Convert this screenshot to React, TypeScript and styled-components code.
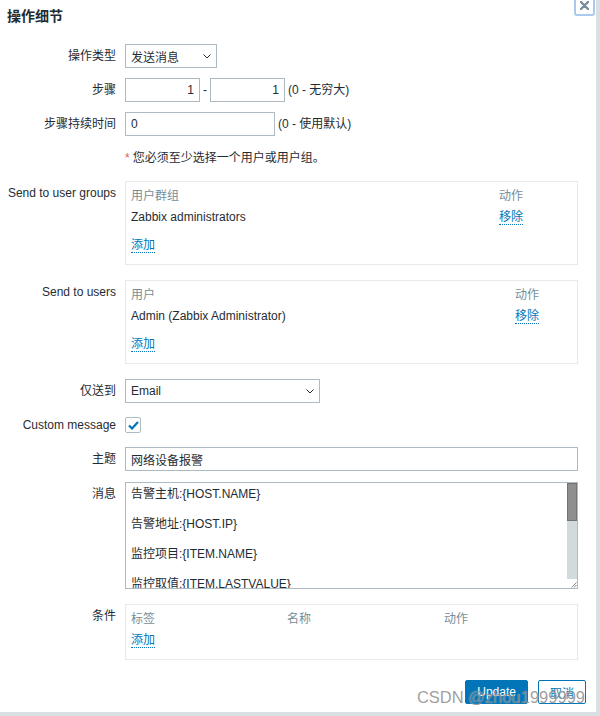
import React from "react";
import styled, { createGlobalStyle } from "styled-components";

const FONT = `"Liberation Sans", Arial, "Noto Sans CJK SC", sans-serif`;
const TEXT = "#1f2c33";
const MUTED = "#768d99";
const BLUE = "#0275b8";
const INPUT_BORDER = "#acbbc2";

const Global = createGlobalStyle`
  *, *::before, *::after { box-sizing: border-box; }
  html, body { margin: 0; padding: 0; }
  body {
    background: #d9dfe3;
    font-family: ${FONT};
    font-size: 12px;
    color: ${TEXT};
  }
`;

const Dialog = styled.div`
  position: relative;
  width: 596px;
  height: 712px;
  background: #ffffff;
  overflow: hidden;
`;

const Header = styled.div`
  height: 44px;
  padding: 7px 7px 0;
`;

const Title = styled.h4`
  margin: 0;
  font-size: 14px;
  line-height: 18px;
  font-weight: bold;
  color: ${TEXT};
`;

const CloseButton = styled.button`
  position: absolute;
  top: -5px;
  right: 1px;
  width: 21px;
  height: 21px;
  border: 2px solid #a9c9ee;
  border-radius: 3px;
  background: #ffffff;
  padding: 0 0 4px;
  display: flex;
  align-items: flex-end;
  justify-content: center;
`;

const Form = styled.div`
  padding-right: 18px;
`;

const Row = styled.div<{ $mb?: number }>`
  display: flex;
  align-items: flex-start;
  margin-bottom: ${(p) => (p.$mb ?? 10)}px;
`;

const Label = styled.div`
  width: 125px;
  flex: none;
  padding-right: 9px;
  text-align: right;
  line-height: 24px;
  white-space: nowrap;
  color: ${TEXT};
`;

const Control = styled.div`
  flex: 1;
  min-height: 24px;
  display: flex;
  align-items: center;
`;

const Input = styled.input<{ $w?: number; $right?: boolean }>`
  width: ${(p) => (p.$w ? `${p.$w}px` : "100%")};
  height: 24px;
  border: 1px solid ${INPUT_BORDER};
  padding: 0 5px;
  font-family: ${FONT};
  font-size: 12px;
  color: ${TEXT};
  background: #ffffff;
  text-align: ${(p) => (p.$right ? "right" : "left")};
  outline: none;
  border-radius: 0;
`;

const Select = styled.div<{ $w: number }>`
  width: ${(p) => p.$w}px;
  height: 24px;
  border: 1px solid ${INPUT_BORDER};
  padding: 0 5px;
  display: flex;
  align-items: center;
  justify-content: space-between;
  color: ${TEXT};
  background: #ffffff;
`;

const Dash = styled.span`
  margin: 0 3px;
  line-height: 24px;
`;

const Hint = styled.span`
  margin-left: 3px;
  line-height: 24px;
  color: ${TEXT};
`;

const Note = styled.div`
  line-height: 24px;
  color: ${TEXT};
`;

const Star = styled.span`
  color: #e45959;
  margin-right: 3px;
`;

const Box = styled.div`
  width: 100%;
  border: 1px solid #e6eaec;
  padding: 4px 5px 8px;
`;

const TableGrid = styled.div<{ $cols: string }>`
  display: grid;
  grid-template-columns: ${(p) => p.$cols};
`;

const HeadCell = styled.div`
  color: ${MUTED};
  line-height: 20px;
  height: 20px;
`;

const Cell = styled.div`
  line-height: 22px;
  height: 22px;
  color: ${TEXT};
`;

const AddRow = styled.div<{ $mt?: number }>`
  margin-top: ${(p) => p.$mt ?? 0}px;
  height: 22px;
  line-height: 22px;
`;

const Link = styled.span`
  color: ${BLUE};
  border-bottom: 1px dotted ${BLUE};
  line-height: 14px;
  display: inline-block;
  cursor: pointer;
`;

const Check = styled.span`
  width: 16px;
  height: 16px;
  border: 1px solid ${INPUT_BORDER};
  border-radius: 2px;
  background: #ffffff;
  display: flex;
  align-items: center;
  justify-content: center;
`;

const TextFrame = styled.div`
  width: 100%;
  height: 107px;
  border: 1px solid ${INPUT_BORDER};
  display: flex;
  background: #ffffff;
`;

const TextArea = styled.textarea`
  flex: 1;
  height: 100%;
  border: none;
  padding: 4px 5px;
  font-family: ${FONT};
  font-size: 12px;
  line-height: 15px;
  color: ${TEXT};
  resize: none;
  overflow: hidden;
  outline: none;
  background: transparent;
  display: block;
`;

const ScrollColumn = styled.div`
  width: 10px;
  flex: none;
  display: flex;
  flex-direction: column;
`;

const Track = styled.div`
  flex: 1;
  background: #d3dade;
`;

const Thumb = styled.div`
  height: 38px;
  background: #8e8e8e;
  border: 1px solid #737373;
`;

const Corner = styled.div`
  height: 9px;
  background: #ffffff;
  display: flex;
  align-items: flex-end;
  justify-content: flex-end;
`;

const Footer = styled.div`
  display: flex;
  justify-content: flex-end;
  gap: 10px;
  padding-right: 10px;
  margin-top: 20px;
`;

const Button = styled.button<{ $primary?: boolean }>`
  height: 24px;
  padding: 0 11px;
  font-family: ${FONT};
  font-size: 12px;
  border: 1px solid ${BLUE};
  border-radius: 2px;
  background: ${(p) => (p.$primary ? BLUE : "#ffffff")};
  color: ${(p) => (p.$primary ? "#ffffff" : BLUE)};
  cursor: pointer;
`;

const Watermark = styled.div`
  position: absolute;
  right: 11px;
  top: 687px;
  font-family: ${FONT};
  font-size: 16.5px;
  line-height: 20px;
  color: rgba(90, 90, 90, 0.6);
  text-shadow: 0 0 1px rgba(255, 255, 255, 0.7);
  pointer-events: none;
  white-space: nowrap;
`;

const Chevron = () => (
  <svg width="8" height="5" viewBox="0 0 8 5" fill="none">
    <path d="M0.5 0.5 L4 4 L7.5 0.5" stroke={TEXT} strokeWidth="1" />
  </svg>
);

const CheckMark = () => (
  <svg width="11" height="9" viewBox="0 0 11 9" fill="none">
    <path d="M1 4.5 L4 7.5 L10 1" stroke={BLUE} strokeWidth="2.2" />
  </svg>
);

const CloseIcon = () => (
  <svg width="9" height="9" viewBox="0 0 9 9">
    <path d="M1 1 L8 8 M8 1 L1 8" stroke={MUTED} strokeWidth="2.4" strokeLinecap="round" />
  </svg>
);

const Grip = () => (
  <svg width="7" height="7" viewBox="0 0 7 7">
    <path d="M6.5 1.5 L1.5 6.5 M6.5 4 L4 6.5" stroke="#6b6b6b" strokeWidth="0.8" />
  </svg>
);

const MESSAGE = [
  "告警主机:{HOST.NAME}",
  "",
  "告警地址:{HOST.IP}",
  "",
  "监控项目:{ITEM.NAME}",
  "",
  "监控取值:{ITEM.LASTVALUE}",
  "",
  "告警等级:{TRIGGER.SEVERITY}",
  "",
  "当前状态:{TRIGGER.STATUS}",
  "",
  "告警信息:{TRIGGER.NAME}",
  "",
  "告警时间:{EVENT.DATE} {EVENT.TIME}",
  "",
  "事件ID:{EVENT.ID}",
].join("\n");

export default function App() {
  return (
    <>
      <Global />
      <Dialog>
        <Header>
          <Title>操作细节</Title>
        </Header>
        <CloseButton aria-label="close">
          <CloseIcon />
        </CloseButton>

        <Form>
          <Row>
            <Label>操作类型</Label>
            <Control>
              <Select $w={92}>
                <span>发送消息</span>
                <Chevron />
              </Select>
            </Control>
          </Row>

          <Row>
            <Label>步骤</Label>
            <Control>
              <Input $w={75} $right defaultValue="1" />
              <Dash>-</Dash>
              <Input $w={75} $right defaultValue="1" />
              <Hint>(0 - 无穷大)</Hint>
            </Control>
          </Row>

          <Row>
            <Label>步骤持续时间</Label>
            <Control>
              <Input $w={150} defaultValue="0" />
              <Hint>(0 - 使用默认)</Hint>
            </Control>
          </Row>

          <Row $mb={11}>
            <Label />
            <Control>
              <Note>
                <Star>*</Star>您必须至少选择一个用户或用户组。
              </Note>
            </Control>
          </Row>

          <Row $mb={15}>
            <Label>Send to user groups</Label>
            <Box>
              <TableGrid $cols="368px 1fr">
                <HeadCell>用户群组</HeadCell>
                <HeadCell>动作</HeadCell>
                <Cell>Zabbix administrators</Cell>
                <Cell>
                  <Link>移除</Link>
                </Cell>
              </TableGrid>
              <AddRow $mt={6}>
                <Link>添加</Link>
              </AddRow>
            </Box>
          </Row>

          <Row $mb={15}>
            <Label>Send to users</Label>
            <Box>
              <TableGrid $cols="384px 1fr">
                <HeadCell>用户</HeadCell>
                <HeadCell>动作</HeadCell>
                <Cell>Admin (Zabbix Administrator)</Cell>
                <Cell>
                  <Link>移除</Link>
                </Cell>
              </TableGrid>
              <AddRow $mt={6}>
                <Link>添加</Link>
              </AddRow>
            </Box>
          </Row>

          <Row>
            <Label>仅送到</Label>
            <Control>
              <Select $w={195}>
                <span>Email</span>
                <Chevron />
              </Select>
            </Control>
          </Row>

          <Row>
            <Label>Custom message</Label>
            <Control>
              <Check>
                <CheckMark />
              </Check>
            </Control>
          </Row>

          <Row $mb={11}>
            <Label>主题</Label>
            <Control>
              <Input defaultValue="网络设备报警" />
            </Control>
          </Row>

          <Row $mb={15}>
            <Label>消息</Label>
            <Control>
              <TextFrame>
                <TextArea defaultValue={MESSAGE} spellCheck={false} />
                <ScrollColumn>
                  <Track>
                    <Thumb />
                  </Track>
                  <Corner>
                    <Grip />
                  </Corner>
                </ScrollColumn>
              </TextFrame>
            </Control>
          </Row>

          <Row $mb={0}>
            <Label>条件</Label>
            <Box>
              <TableGrid $cols="156px 157px 1fr">
                <HeadCell>标签</HeadCell>
                <HeadCell>名称</HeadCell>
                <HeadCell>动作</HeadCell>
              </TableGrid>
              <AddRow>
                <Link>添加</Link>
              </AddRow>
            </Box>
          </Row>
        </Form>

        <Footer>
          <Button $primary>Update</Button>
          <Button>取消</Button>
        </Footer>

        <Watermark>CSDN @zhou1999999</Watermark>
      </Dialog>
    </>
  );
}
